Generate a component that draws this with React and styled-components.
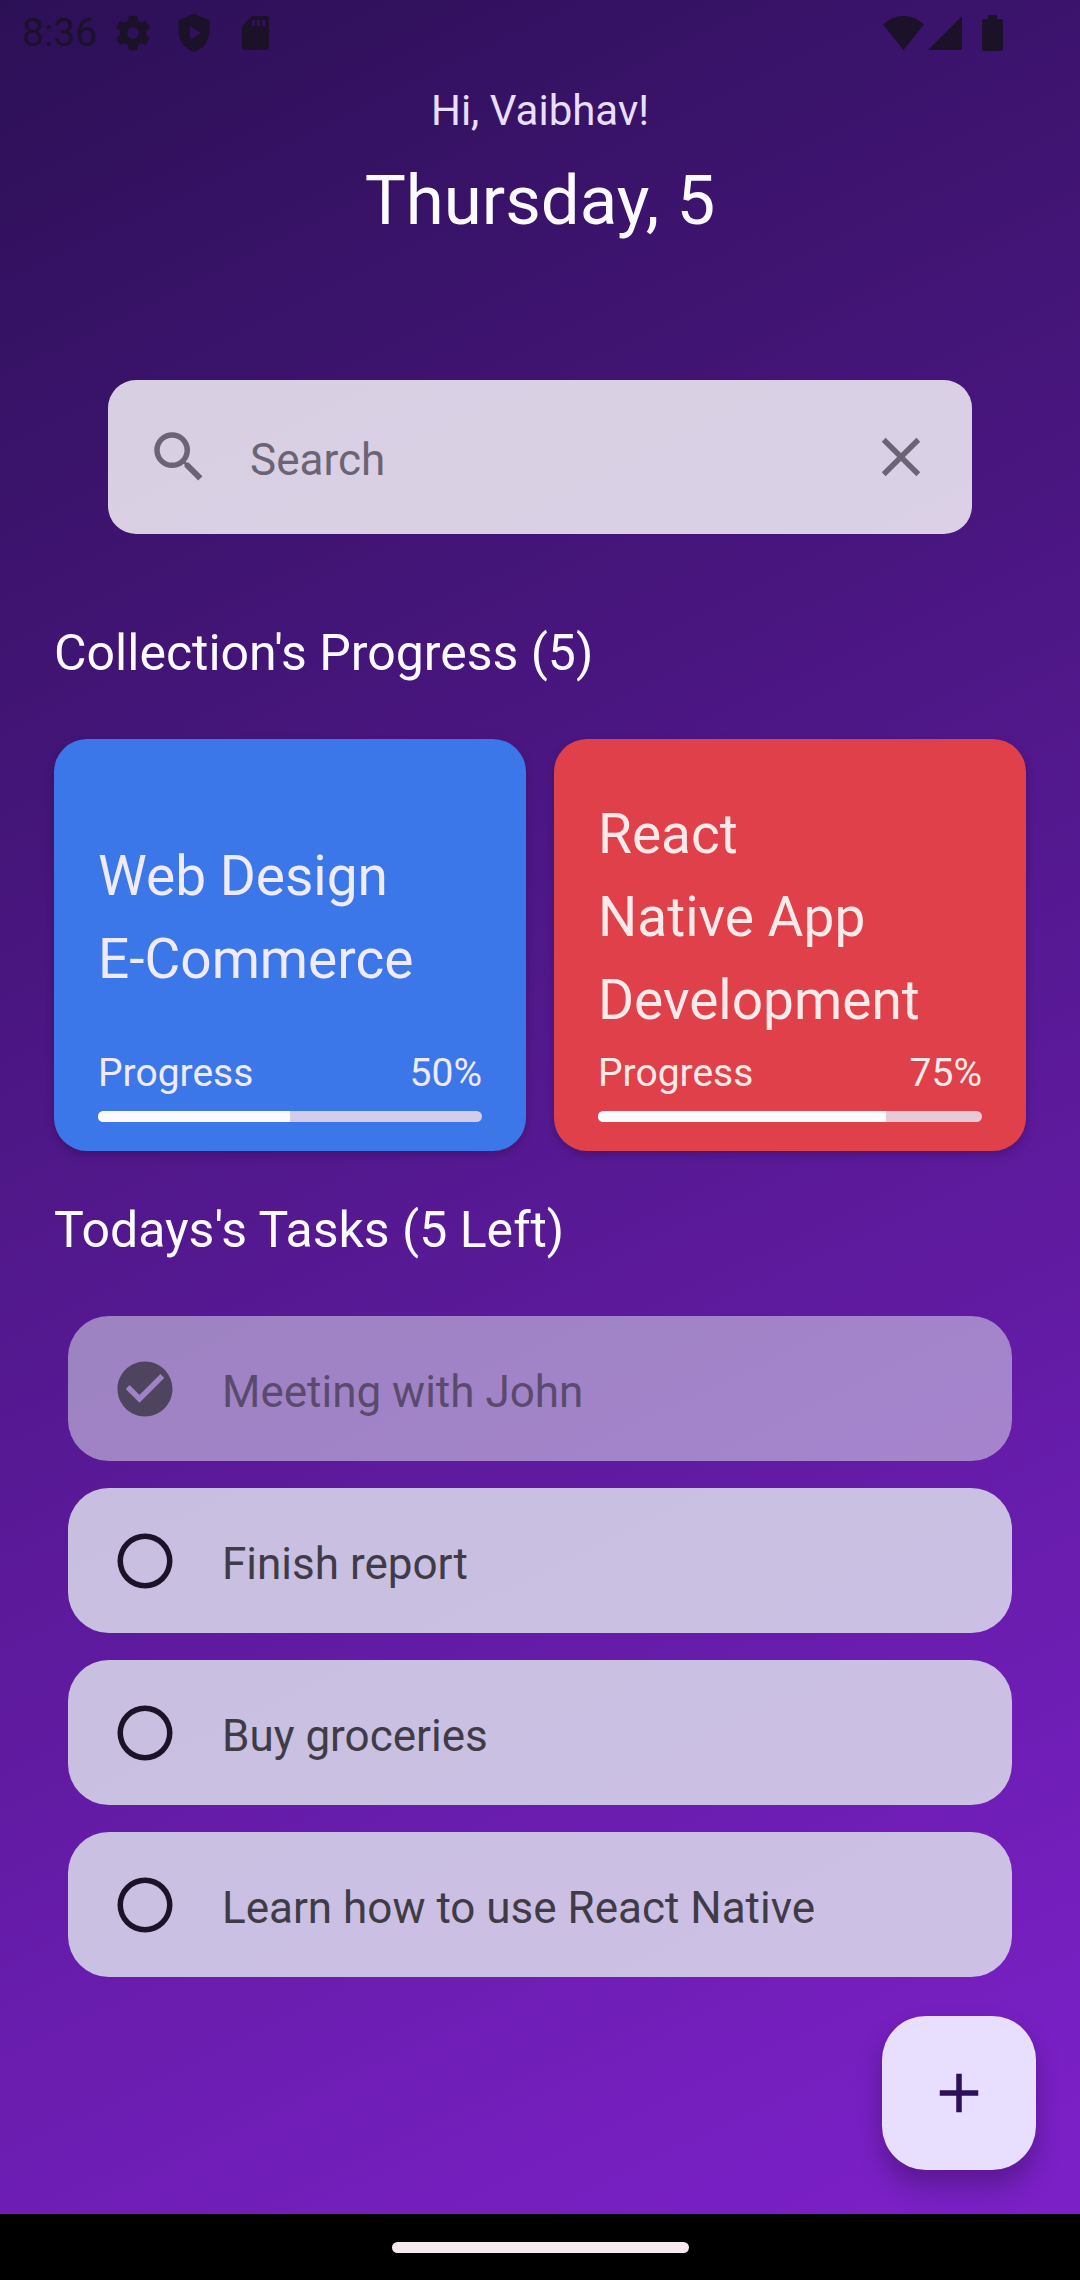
import React, { useState } from 'react';
import styled, { createGlobalStyle } from 'styled-components';

const GlobalStyle = createGlobalStyle`
  * {
    box-sizing: border-box;
  }

  body {
    margin: 0;
    background: #000;
    font-family: Roboto, 'Liberation Sans', sans-serif;
  }

  button {
    padding: 0;
    border: none;
    cursor: pointer;
  }

  svg {
    display: block;
    fill: currentColor;
  }
`;

const Screen = styled.div`
  display: flex;
  flex-direction: column;
  min-height: 100vh;
`;

const Home = styled.div`
  position: relative;
  flex: 1;
  padding-bottom: 66px;
  overflow: hidden;
  background: linear-gradient(154deg, #2c1056 0%, #7a20c6 96%);
`;

const StatusBar = styled.div`
  display: flex;
  align-items: center;
  justify-content: space-between;
  height: 66px;
  padding: 0 77px 0 22px;
  color: #1b1128;
`;

const StatusGroup = styled.div`
  display: flex;
  align-items: center;
  gap: ${(props) => props.$gap}px;
`;

const Clock = styled.span`
  margin-right: 18px;
  font-size: 39px;
  line-height: 66px;
`;

const Header = styled.header`
  padding-top: 17px;
  text-align: center;
`;

const Greeting = styled.p`
  margin: 0 0 14px;
  color: #e8dfff;
  font-size: 42px;
  line-height: 56px;
`;

const DateTitle = styled.h1`
  margin: 0;
  color: #fafaff;
  font-size: 69px;
  font-weight: 400;
  line-height: 96px;
`;

const SearchBar = styled.form`
  display: flex;
  align-items: center;
  height: 154px;
  margin: 131px 10% 0;
  padding: 0 38px;
  border-radius: 28px;
  background: rgba(244, 241, 248, 0.85);
  color: #6a6474;
`;

const SearchLabel = styled.label`
  margin-right: 38px;
`;

const SearchInput = styled.input`
  flex: 1;
  min-width: 0;
  padding: 6px 0 0;
  border: none;
  outline: none;
  background: transparent;
  color: #3f3c48;
  font-family: inherit;
  font-size: 44px;

  &::placeholder {
    color: #6a6474;
    opacity: 1;
  }
`;

const ClearButton = styled.button`
  background: transparent;
  color: inherit;
`;

const Section = styled.section`
  padding: ${(props) => props.$top}px 5% 0;
`;

const SectionTitle = styled.h2`
  margin: 0 0 53px;
  color: #fafaff;
  font-size: 50px;
  font-weight: 400;
  line-height: 66px;
`;

const Collections = styled.div`
  display: grid;
  grid-template-columns: 1fr 1fr;
  gap: 28px;
`;

const Card = styled.article`
  display: flex;
  flex-direction: column;
  min-height: 412px;
  padding: 50px 44px 29px;
  border-radius: 33px;
  background: ${(props) => props.$color};
  box-shadow: 0 4px 10px rgba(0, 0, 0, 0.2);
  color: ${(props) => props.$text};
`;

const CardTitle = styled.h3`
  display: flex;
  flex: 1;
  align-items: center;
  margin: 0;
  font-size: 55px;
  font-weight: 400;
  line-height: 83px;
  white-space: pre-line;
`;

const ProgressRow = styled.div`
  display: flex;
  justify-content: space-between;
  margin-bottom: 10px;
  font-size: 39px;
  line-height: 55px;
`;

const Track = styled.div`
  height: 11px;
  overflow: hidden;
  border-radius: 6px;
  background: ${(props) => props.$color};
`;

const Fill = styled.div`
  height: 100%;
  background: #fafaff;
`;

const TaskList = styled.ul`
  display: flex;
  flex-direction: column;
  gap: 27px;
  margin: 0 14px;
  padding: 0;
  list-style: none;
`;

const Task = styled.label`
  display: flex;
  align-items: center;
  gap: 44px;
  height: 145px;
  padding: 0 44px;
  border-radius: 41px;
  background: ${(props) =>
    props.$done ? 'rgba(220, 221, 236, 0.54)' : 'rgba(220, 221, 236, 0.85)'};
  color: ${(props) => (props.$done ? '#5a4b6e' : '#3f3c48')};
  cursor: pointer;
`;

const Check = styled.span`
  position: relative;
  color: ${(props) => (props.$done ? '#4f445f' : '#1d1329')};
`;

const Checkbox = styled.input`
  position: absolute;
  inset: 0;
  width: 100%;
  height: 100%;
  margin: 0;
  opacity: 0;
`;

const TaskText = styled.span`
  padding-top: 6px;
  font-size: 44px;
  line-height: 66px;
`;

const AddButton = styled.button`
  position: absolute;
  right: 44px;
  bottom: 44px;
  display: flex;
  align-items: center;
  justify-content: center;
  width: 154px;
  height: 154px;
  border-radius: 44px;
  background: #e8dfff;
  box-shadow: 0 16px 26px rgba(0, 0, 0, 0.26);
  color: #2d0f5a;
`;

const NavBar = styled.div`
  display: flex;
  align-items: center;
  justify-content: center;
  height: 66px;
  background: #000;
`;

const Handle = styled.div`
  width: 297px;
  height: 11px;
  border-radius: 6px;
  background: #f6e9ef;
`;

const icons = {
  search:
    'M9.5 3A6.5 6.5 0 0 1 16 9.5c0 1.61-.59 3.09-1.56 4.23l.27.27h.79l5 5-1.5 1.5-5-5v-.79l-.27-.27A6.516 6.516 0 0 1 9.5 16a6.5 6.5 0 0 1 0-13m0 2C7 5 5 7 5 9.5S7 14 9.5 14 14 12 14 9.5 12 5 9.5 5z',
  close:
    'M19 6.41 17.59 5 12 10.59 6.41 5 5 6.41 10.59 12 5 17.59 6.41 19 12 13.41 17.59 19 19 17.59 13.41 12 19 6.41z',
  plus: 'M19 13h-6v6h-2v-6H5v-2h6V5h2v6h6v2z',
  circle:
    'M12 20a8 8 0 0 1-8-8 8 8 0 0 1 8-8 8 8 0 0 1 8 8 8 8 0 0 1-8 8m0-18A10 10 0 0 0 2 12a10 10 0 0 0 10 10 10 10 0 0 0 10-10A10 10 0 0 0 12 2z',
  checked:
    'M12 2C6.5 2 2 6.5 2 12s4.5 10 10 10 10-4.5 10-10S17.5 2 12 2m-2 15-5-5 1.41-1.41L10 14.17l7.59-7.59L19 8l-9 9z',
};

function Icon({ name }) {
  return (
    <svg width="66" height="66" viewBox="0 0 24 24" aria-hidden="true">
      <path d={icons[name]} />
    </svg>
  );
}

function StatusIcons() {
  return (
    <StatusGroup $gap={25}>
      <svg width="36" height="40" viewBox="2 0.9 20 22.2" aria-hidden="true">
        <path d="M19.14 12.94c.04-.3.06-.61.06-.94 0-.32-.02-.64-.07-.94l2.03-1.58a.49.49 0 0 0 .12-.61l-1.92-3.32a.488.488 0 0 0-.59-.22l-2.39.96c-.5-.38-1.03-.7-1.62-.94l-.36-2.54a.484.484 0 0 0-.48-.41h-3.84c-.24 0-.43.17-.47.41l-.36 2.54c-.59.24-1.13.57-1.62.94l-2.39-.96c-.22-.08-.47 0-.59.22L2.74 8.87c-.12.21-.08.47.12.61l2.03 1.58c-.05.3-.09.63-.09.94s.02.64.07.94l-2.03 1.58a.49.49 0 0 0-.12.61l1.92 3.32c.12.22.37.29.59.22l2.39-.96c.5.38 1.03.7 1.62.94l.36 2.54c.05.24.24.41.48.41h3.84c.24 0 .44-.17.47-.41l.36-2.54c.59-.24 1.13-.56 1.62-.94l2.39.96c.22.08.47 0 .59-.22l1.92-3.32c.12-.22.07-.47-.12-.61l-2.01-1.58zM12 15.2a3.2 3.2 0 1 1 0-6.4 3.2 3.2 0 0 1 0 6.4z" />
      </svg>
      <svg width="36" height="40" viewBox="0 0 36 40" aria-hidden="true">
        <path
          fillRule="evenodd"
          d="M18 1 33 7q.5.3.5 1v10C33.5 28 27 36 18 39 9 36 2.5 28 2.5 18V8q0-.7.5-1zM14 13v14l11-7z"
        />
      </svg>
      <svg width="36" height="40" viewBox="0 0 36 40" aria-hidden="true">
        <path
          fillRule="evenodd"
          d="M15 3h14q3 0 3 3v28q0 3-3 3H8q-3 0-3-3V13zM15 7v6h3V7zM20 7v6h3V7zM25 7v6h3V7z"
        />
      </svg>
    </StatusGroup>
  );
}

function SignalIcons() {
  return (
    <StatusGroup $gap={4}>
      <svg width="41" height="36" viewBox="0 0 41 36" aria-hidden="true">
        <path d="M0 9.5Q9 1 20.5 1T41 9.5L20.5 35z" />
      </svg>
      <svg width="34" height="36" viewBox="0 0 34 36" aria-hidden="true">
        <path d="M34 1v34H0z" />
      </svg>
      <svg width="37" height="36" viewBox="0 0 37 36" aria-hidden="true">
        <path d="M22 0h9v4h4q2 0 2 2v28q0 2-2 2H18q-2 0-2-2V6q0-2 2-2h4z" />
      </svg>
    </StatusGroup>
  );
}

function CollectionCard({ title, progress, color, text, track }) {
  return (
    <Card $color={color} $text={text}>
      <CardTitle>{title}</CardTitle>
      <ProgressRow>
        <span>Progress</span>
        <span>{progress}%</span>
      </ProgressRow>
      <Track
        $color={track}
        role="progressbar"
        aria-label="Progress"
        aria-valuenow={progress}
        aria-valuemin={0}
        aria-valuemax={100}
      >
        <Fill style={{ width: `${progress}%` }} />
      </Track>
    </Card>
  );
}

const collections = [
  {
    title: 'Web Design\nE-Commerce',
    progress: 50,
    color: '#3b77e8',
    text: '#f0ebfc',
    track: '#d2cdea',
  },
  {
    title: 'React\nNative App\nDevelopment',
    progress: 75,
    color: '#df4049',
    text: '#f9eaea',
    track: '#e6cbd6',
  },
];

const initialTasks = [
  { id: 1, text: 'Meeting with John', done: true },
  { id: 2, text: 'Finish report', done: false },
  { id: 3, text: 'Buy groceries', done: false },
  { id: 4, text: 'Learn how to use React Native', done: false },
];

function App() {
  const [query, setQuery] = useState('');
  const [tasks, setTasks] = useState(initialTasks);

  const toggleTask = (id) => {
    setTasks(tasks.map((t) => (t.id === id ? { ...t, done: !t.done } : t)));
  };

  return (
    <Screen>
      <GlobalStyle />
      <Home>
        <StatusBar>
          <StatusGroup $gap={0}>
            <Clock>8:36</Clock>
            <StatusIcons />
          </StatusGroup>
          <SignalIcons />
        </StatusBar>

        <Header>
          <Greeting>Hi, Vaibhav!</Greeting>
          <DateTitle>Thursday, 5</DateTitle>
        </Header>

        <SearchBar onSubmit={(e) => e.preventDefault()}>
          <SearchLabel htmlFor="search" aria-label="Search">
            <Icon name="search" />
          </SearchLabel>
          <SearchInput
            id="search"
            type="text"
            placeholder="Search"
            value={query}
            onChange={(e) => setQuery(e.target.value)}
          />
          <ClearButton type="button" aria-label="Clear" onClick={() => setQuery('')}>
            <Icon name="close" />
          </ClearButton>
        </SearchBar>

        <Section $top={86}>
          <SectionTitle>Collection's Progress (5)</SectionTitle>
          <Collections>
            {collections.map((c) => (
              <CollectionCard key={c.title} {...c} />
            ))}
          </Collections>
        </Section>

        <Section $top={46}>
          <SectionTitle>Todays's Tasks (5 Left)</SectionTitle>
          <TaskList>
            {tasks.map((t) => (
              <li key={t.id}>
                <Task $done={t.done}>
                  <Check $done={t.done}>
                    <Checkbox
                      type="checkbox"
                      checked={t.done}
                      onChange={() => toggleTask(t.id)}
                    />
                    <Icon name={t.done ? 'checked' : 'circle'} />
                  </Check>
                  <TaskText>{t.text}</TaskText>
                </Task>
              </li>
            ))}
          </TaskList>
        </Section>

        <AddButton type="button" aria-label="Add task">
          <Icon name="plus" />
        </AddButton>
      </Home>
      <NavBar>
        <Handle />
      </NavBar>
    </Screen>
  );
}

export default App;
